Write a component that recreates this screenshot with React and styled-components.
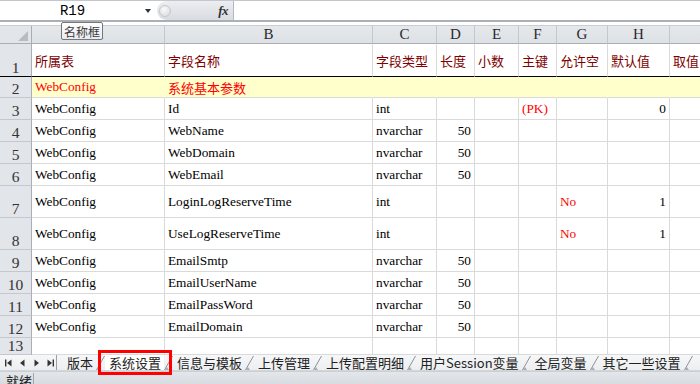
import React from "react";
import styled, { createGlobalStyle } from "styled-components";

const GlobalStyle = createGlobalStyle`
  html, body { margin: 0; padding: 0; background: #fff; overflow: hidden; }
  #root { width: 700px; height: 384px; }
`;

const Window = styled.div`
  position: relative;
  width: 700px;
  height: 384px;
  display: flex;
  flex-direction: column;
  overflow: hidden;
  font-family: "Liberation Serif", "Noto Sans CJK SC", serif;
  background: #fff;
`;

/* ---------- formula bar ---------- */
const FormulaBar = styled.div`
  flex: 0 0 22px;
  box-sizing: border-box;
  display: flex;
  border-top: 1px solid #c3c7cd;
  border-bottom: 2px solid #aab0b7;
  background: #fff;
`;

const NameBox = styled.div`
  width: 157px;
  display: flex;
  align-items: center;
`;

const NameText = styled.span`
  flex: 1;
  text-align: center;
  font-family: "Liberation Mono", monospace;
  font-size: 14px;
  color: #000;
`;

const DropArrow = styled.span`
  width: 0;
  height: 0;
  border-left: 3.5px solid transparent;
  border-right: 3.5px solid transparent;
  border-top: 4px solid #333;
  margin-right: 6px;
`;

const FxSegment = styled.div`
  width: 77px;
  box-sizing: border-box;
  display: flex;
  align-items: center;
  justify-content: space-between;
  background: linear-gradient(#eceef1, #d8dbe0);
  border-radius: 10px 0 0 10px;
  border-right: 1px solid #b3b8bf;
  padding: 0 5px 0 2px;
`;

const Grip = styled.span`
  width: 10px;
  height: 10px;
  border-radius: 50%;
  background: radial-gradient(circle at 40% 35%, #fafafa, #d3d6da);
  border: 1px solid #c4c8cd;
`;

const FxLabel = styled.span`
  font-family: "Liberation Serif", serif;
  font-style: italic;
  font-weight: bold;
  font-size: 13px;
  color: #333;
  letter-spacing: -0.5px;
`;

const FormulaInput = styled.div`
  flex: 1;
  background: #fff;
`;

const Spacer = styled.div`
  flex: 0 0 4px;
  box-sizing: border-box;
  border-bottom: 1px solid #c9cdd2;
  background: #fff;
`;

/* ---------- sheet grid ---------- */
const Sheet = styled.div`
  flex: 1;
  min-height: 0;
  display: grid;
  grid-template-columns: 32px 133px 208px 64px 38px 44px 38px 51px 62px 80px;
  grid-template-rows: 18px 33px 21px repeat(4, 22px) repeat(2, 32px) repeat(4, 22px) 1fr;
  overflow: hidden;
`;

const Corner = styled.div`
  box-sizing: border-box;
  background: #e2e5e9;
  border-right: 1px solid #a9aeb5;
  border-bottom: 1px solid #a9aeb5;
  display: flex;
  align-items: flex-end;
  justify-content: flex-end;
  padding: 0 3px 2px 0;
`;

const CornerMark = styled.span`
  width: 0;
  height: 0;
  border-left: 10px solid transparent;
  border-bottom: 10px solid #b8bcc2;
`;

const ColHead = styled.div`
  box-sizing: border-box;
  background: linear-gradient(#e6e9ec, #dde0e4);
  border-right: 1px solid #c3c8ce;
  border-bottom: 1px solid #a9aeb5;
  display: flex;
  align-items: center;
  justify-content: center;
  font-family: "Liberation Serif", serif;
  font-size: 15px;
  color: #2a2a2a;
  overflow: hidden;
`;

const RowHead = styled.div`
  box-sizing: border-box;
  background: #e2e5e9;
  border-right: 1px solid #a9aeb5;
  border-bottom: ${(p) => (p.$freeze ? "1px solid #000" : "1px solid #c3c8ce")};
  display: flex;
  align-items: flex-end;
  justify-content: center;
  padding-bottom: 1px;
  font-family: "Liberation Serif", serif;
  font-size: 15.5px;
  line-height: 15px;
  color: #333;
  overflow: hidden;
`;

const Cell = styled.div`
  box-sizing: border-box;
  background: ${(p) => p.$fill || "#fff"};
  border-right: 1px solid ${(p) => p.$fill || "#dadada"};
  border-bottom: ${(p) => (p.$freeze ? "1px solid #000" : "1px solid #dadada")};
  color: ${(p) => p.$color || "#000"};
  display: flex;
  align-items: center;
  justify-content: ${(p) => (p.$num ? "flex-end" : "flex-start")};
  padding: 0 3px;
  font-family: "Liberation Serif", "Noto Sans CJK SC", serif;
  font-size: ${(p) => (p.$cjk ? "13px" : "13.3px")};
  white-space: nowrap;
  overflow: hidden;
`;

/* ---------- sheet tabs ---------- */
const TabBar = styled.div`
  flex: 0 0 15px;
  display: flex;
  align-items: stretch;
  background: linear-gradient(#f6f7f8, #eceef0);
  overflow: hidden;
`;

const NavGroup = styled.div`
  width: 57px;
  box-sizing: border-box;
  border-right: 1px solid #9aa0a7;
  display: flex;
  align-items: center;
  padding-left: 4px;
  gap: 5px;
`;

const NavBtn = styled.svg`
  width: 9px;
  height: 8px;
  flex: 0 0 9px;
`;

const Tab = styled.div`
  display: flex;
  align-items: center;
  padding: ${(p) => (p.$first ? "0 3px 0 10px" : "0 3px 0 4px")};
  background: ${(p) => (p.$active ? "#fff" : "transparent")};
  font-family: "Noto Sans CJK SC", sans-serif;
  font-size: 13px;
  line-height: 15px;
  color: #222;
  white-space: nowrap;
`;

const TabSep = styled.svg`
  width: 9px;
  height: 15px;
  flex: 0 0 9px;
`;

const TabBase = styled.div`
  flex: 0 0 2px;
  background: linear-gradient(#d6d9dd, #c9cdd2);
`;

const StatusBar = styled.div`
  flex: 0 0 12px;
  display: flex;
  align-items: flex-start;
  background: linear-gradient(#e3e6ea, #d8dce1);
  overflow: hidden;
`;

const StatusText = styled.span`
  width: 34px;
  box-sizing: border-box;
  padding-left: 6px;
  border-right: 1px solid #a0a5ab;
  font-family: "Noto Sans CJK SC", sans-serif;
  font-size: 13px;
  line-height: 15px;
  margin-top: 1px;
  color: #222;
`;

/* ---------- overlays ---------- */
const Tooltip = styled.div`
  position: absolute;
  left: 61px;
  top: 22px;
  width: 42px;
  height: 18px;
  box-sizing: border-box;
  border: 1px solid #767676;
  border-radius: 2px;
  background: linear-gradient(#ffffff, #e9eaf0);
  display: flex;
  align-items: center;
  justify-content: center;
  font-family: "Noto Sans CJK SC", sans-serif;
  font-size: 12px;
  color: #3a3a3a;
`;

const Highlight = styled.div`
  position: absolute;
  left: 98px;
  top: 350px;
  width: 74px;
  height: 25px;
  box-sizing: border-box;
  border: 3px solid #f00;
`;

const COLS = ["A", "B", "C", "D", "E", "F", "G", "H", "I"];
const DARK_RED = "#800000";

const v = (t, o = {}) => ({ t, ...o });

const ROWS = [
  {
    n: 1,
    freeze: true,
    cells: ["所属表", "字段名称", "字段类型", "长度", "小数", "主键", "允许空", "默认值", "取值"].map(
      (t) => v(t, { color: DARK_RED, cjk: true })
    ),
  },
  {
    n: 2,
    fill: "#ffffcc",
    cells: [v("WebConfig", { color: "#f00" }), v("系统基本参数", { color: "#f00", cjk: true })],
  },
  {
    n: 3,
    cells: [
      v("WebConfig"),
      v("Id"),
      v("int"),
      v(""),
      v(""),
      v("(PK)", { color: "#f00" }),
      v(""),
      v("0", { num: true }),
    ],
  },
  { n: 4, cells: [v("WebConfig"), v("WebName"), v("nvarchar"), v("50", { num: true })] },
  { n: 5, cells: [v("WebConfig"), v("WebDomain"), v("nvarchar"), v("50", { num: true })] },
  { n: 6, cells: [v("WebConfig"), v("WebEmail"), v("nvarchar"), v("50", { num: true })] },
  {
    n: 7,
    cells: [
      v("WebConfig"),
      v("LoginLogReserveTime"),
      v("int"),
      v(""),
      v(""),
      v(""),
      v("No", { color: "#f00" }),
      v("1", { num: true }),
    ],
  },
  {
    n: 8,
    cells: [
      v("WebConfig"),
      v("UseLogReserveTime"),
      v("int"),
      v(""),
      v(""),
      v(""),
      v("No", { color: "#f00" }),
      v("1", { num: true }),
    ],
  },
  { n: 9, cells: [v("WebConfig"), v("EmailSmtp"), v("nvarchar"), v("50", { num: true })] },
  { n: 10, cells: [v("WebConfig"), v("EmailUserName"), v("nvarchar"), v("50", { num: true })] },
  { n: 11, cells: [v("WebConfig"), v("EmailPassWord"), v("nvarchar"), v("50", { num: true })] },
  { n: 12, cells: [v("WebConfig"), v("EmailDomain"), v("nvarchar"), v("50", { num: true })] },
  { n: 13, cells: [] },
];

const TABS = ["版本", "系统设置", "信息与模板", "上传管理", "上传配置明细", "用户Session变量", "全局变量", "其它一些设置"];

function Separator() {
  return (
    <TabSep viewBox="0 0 9 15">
      <line x1="0.5" y1="15" x2="8.5" y2="1" stroke="#8c9198" strokeWidth="1" />
      <path d="M1 15 L5 15 L3 12 Z" fill="#a9aeb4" />
    </TabSep>
  );
}

export default function App() {
  return (
    <>
      <GlobalStyle />
      <Window>
        <FormulaBar>
          <NameBox>
            <NameText>R19</NameText>
            <DropArrow />
          </NameBox>
          <FxSegment>
            <Grip />
            <FxLabel>fx</FxLabel>
          </FxSegment>
          <FormulaInput />
        </FormulaBar>
        <Spacer />
        <Sheet>
          <Corner>
            <CornerMark />
          </Corner>
          {COLS.map((c) => (
            <ColHead key={c}>{c}</ColHead>
          ))}
          {ROWS.map((r) => (
            <React.Fragment key={r.n}>
              <RowHead $freeze={r.freeze}>{r.n}</RowHead>
              {COLS.map((c, i) => {
                const cell = r.cells[i] || { t: "" };
                return (
                  <Cell
                    key={c}
                    $freeze={r.freeze}
                    $fill={r.fill}
                    $color={cell.color}
                    $num={cell.num}
                    $cjk={cell.cjk}
                  >
                    {cell.t}
                  </Cell>
                );
              })}
            </React.Fragment>
          ))}
        </Sheet>
        <TabBar>
          <NavGroup>
            <NavBtn viewBox="0 0 9 8">
              <rect x="1" y="0.5" width="1.4" height="7" fill="#333" />
              <path d="M7.5 0.5 L3 4 L7.5 7.5 Z" fill="#333" />
            </NavBtn>
            <NavBtn viewBox="0 0 9 8">
              <path d="M6.5 0.5 L2 4 L6.5 7.5 Z" fill="#333" />
            </NavBtn>
            <NavBtn viewBox="0 0 9 8">
              <path d="M2.5 0.5 L7 4 L2.5 7.5 Z" fill="#333" />
            </NavBtn>
            <NavBtn viewBox="0 0 9 8">
              <path d="M1.5 0.5 L6 4 L1.5 7.5 Z" fill="#333" />
              <rect x="6.6" y="0.5" width="1.4" height="7" fill="#333" />
            </NavBtn>
          </NavGroup>
          {TABS.map((t, i) => (
            <React.Fragment key={t}>
              <Tab $first={i === 0} $active={i === 1}>
                {t}
              </Tab>
              <Separator />
            </React.Fragment>
          ))}
        </TabBar>
        <TabBase />
        <StatusBar>
          <StatusText>就绪</StatusText>
        </StatusBar>
        <Tooltip>名称框</Tooltip>
        <Highlight />
      </Window>
    </>
  );
}
